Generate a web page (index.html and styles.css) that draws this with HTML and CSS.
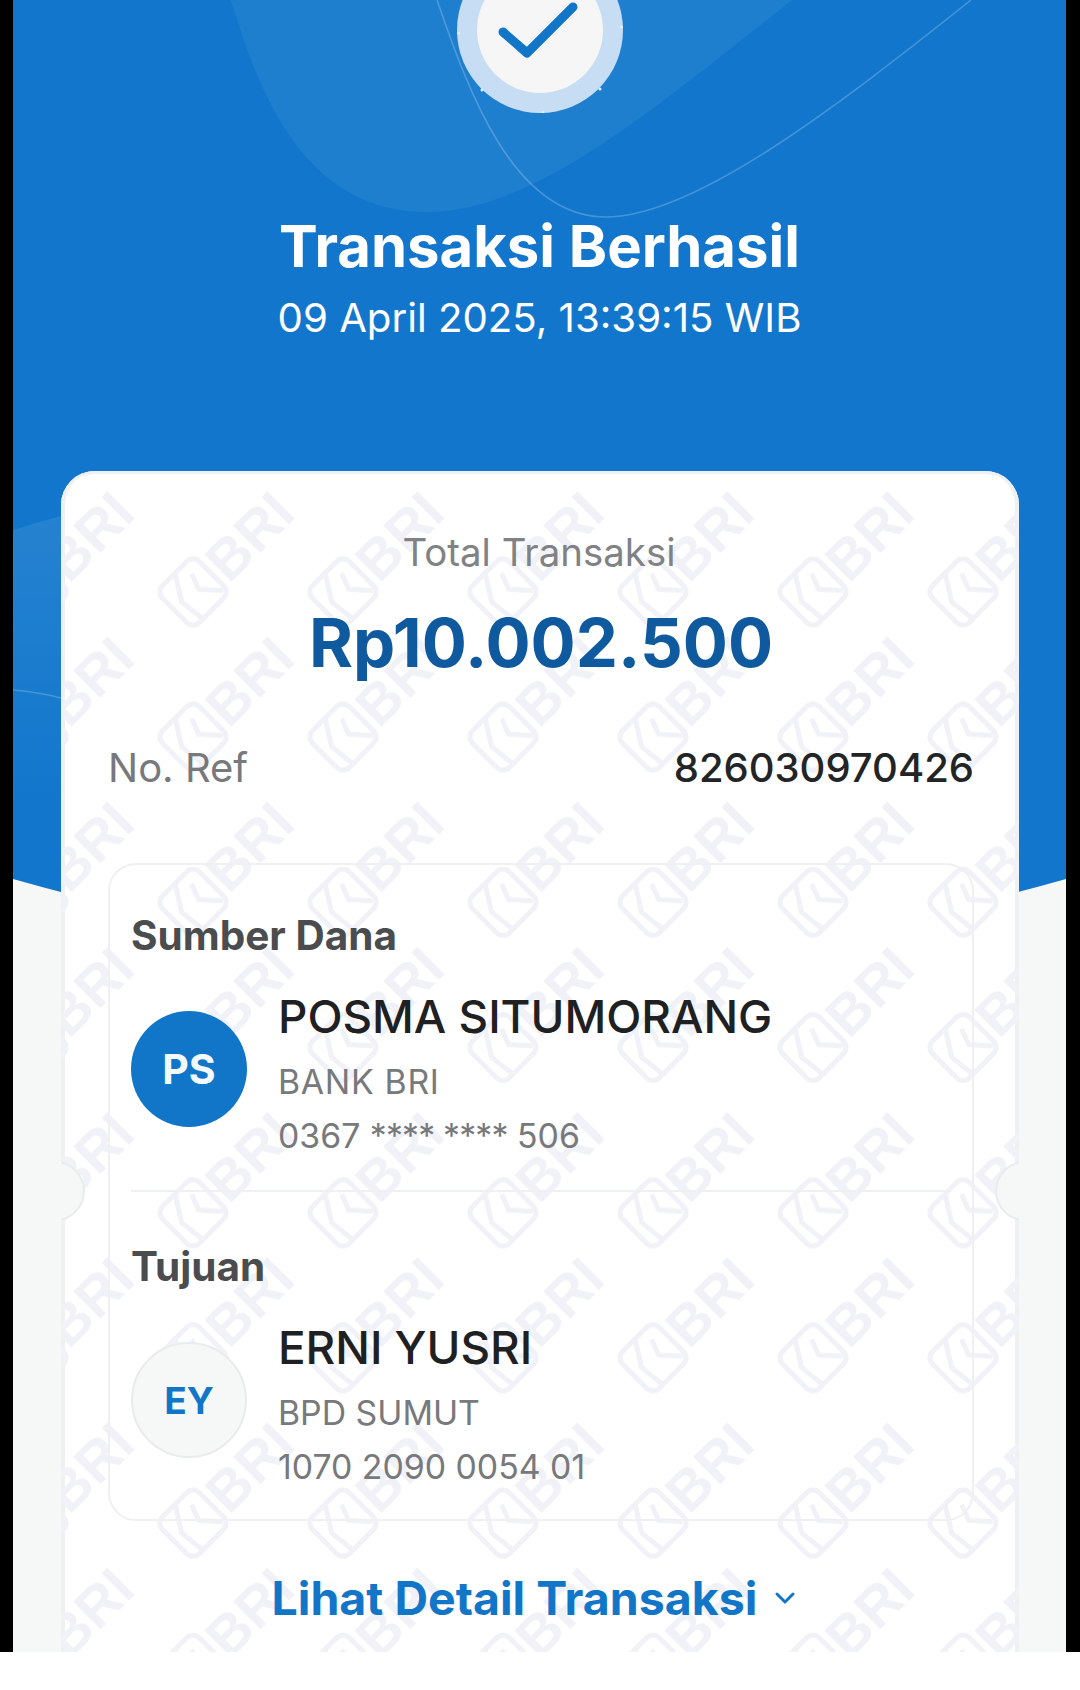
FILE: index.html
```html
<!DOCTYPE html>
<html lang="id">
<head>
  <meta charset="UTF-8">
  <title>Transaksi Berhasil</title>
  <link rel="stylesheet" href="styles.css">
</head>
<body>

<div class="screen">
  <!-- Latar biru dengan lengkung bawah -->
  <svg class="hero-bg" width="1053" height="960" viewBox="0 0 1053 960">
    <defs>
      <linearGradient id="sideFade" x1="0" y1="0" x2="0" y2="1">
        <stop offset="0" stop-color="#fff" stop-opacity="0.08"/>
        <stop offset="1" stop-color="#fff" stop-opacity="0"/>
      </linearGradient>
    </defs>
    <path d="M0 0H1053V879Q526 1029 0 879Z" fill="#1277cc"/>
    <path d="M218 0C245 90 290 212 414 212C520 212 640 110 779 0Z" fill="#fff" fill-opacity="0.06"/>
    <path d="M424 0C455 90 500 217 593 217C680 217 820 110 958 0" fill="none" stroke="#fff" stroke-opacity="0.22" stroke-width="1.5"/>
    <path d="M0 530Q25 522 48 516V800H0Z" fill="url(#sideFade)"/>
    <path d="M0 690Q25 692 48 698" fill="none" stroke="#fff" stroke-opacity="0.2" stroke-width="1.5"/>
  </svg>

  <div class="badge">
    <svg class="badge-icon" width="166" height="166" viewBox="0 0 166 166">
      <circle cx="83" cy="83" r="83" fill="#c6ddf3"/>
      <circle cx="83" cy="83" r="63" fill="#f6f6f6"/>
      <path d="M46 85L70 106L116 60" fill="none" stroke="#1276c8" stroke-width="9" stroke-linecap="round" stroke-linejoin="round"/>
      <g fill="#e4f0fb">
        <circle cx="86" cy="165" r="1.5"/>
        <circle cx="25" cy="143" r="1.5"/>
        <circle cx="143" cy="142" r="1.5"/>
        <circle cx="1.5" cy="86" r="1.5"/>
        <circle cx="164.5" cy="80" r="1.5"/>
      </g>
    </svg>
  </div>

  <h1 class="title">Transaksi Berhasil</h1>
  <p class="date">09 April 2025, 13:39:15 WIB</p>

  <div class="card">
    <svg class="watermark" width="958" height="1181">
      <defs>
        <g id="briLogo">
          <rect x="-26" y="-26" width="52" height="52" rx="9" fill="none" stroke="#f0f2f8" stroke-width="5"/>
          <path d="M0 -25L-15 -1L-12 25M12 -14L6 2L22 20" fill="none" stroke="#f0f2f8" stroke-width="5"/>
          <text class="wm-text" x="31" y="20">BRI</text>
        </g>
        <pattern id="briTile" x="87" y="11" width="310" height="310.4" patternUnits="userSpaceOnUse">
          <use href="#briLogo" transform="translate(45 110) rotate(-45)"/>
          <use href="#briLogo" transform="translate(195 110) rotate(-45)"/>
          <use href="#briLogo" transform="translate(45 255) rotate(-45)"/>
          <use href="#briLogo" transform="translate(195 255) rotate(-45)"/>
        </pattern>
      </defs>
      <rect width="958" height="1181" fill="url(#briTile)"/>
    </svg>

    <span class="notch notch-left"></span>
    <span class="notch notch-right"></span>

    <div class="card-body">
      <div class="total-label">Total Transaksi</div>
      <div class="total-value">Rp10.002.500</div>

      <div class="ref-row">
        <span class="ref-label">No. Ref</span>
        <span class="ref-value">826030970426</span>
      </div>

      <div class="parties">
        <div class="party party-source">
          <div class="party-title">Sumber Dana</div>
          <div class="party-row">
            <div class="avatar avatar-fill">PS</div>
            <div class="party-info">
              <div class="party-name">POSMA SITUMORANG</div>
              <div class="party-sub party-bank">BANK BRI</div>
              <div class="party-sub">0367 <span class="mask">**** ****</span> 506</div>
            </div>
          </div>
        </div>
        <div class="party party-target">
          <div class="party-title">Tujuan</div>
          <div class="party-row">
            <div class="avatar avatar-line">EY</div>
            <div class="party-info">
              <div class="party-name">ERNI YUSRI</div>
              <div class="party-sub">BPD SUMUT</div>
              <div class="party-sub">1070 2090 0054 01</div>
            </div>
          </div>
        </div>
      </div>

      <div class="detail-link">
        <span>Lihat Detail Transaksi</span>
        <svg width="22" height="14" viewBox="0 0 22 14"><path d="M3 3L11 11L19 3" fill="none" stroke="#1276c8" stroke-width="3" stroke-linecap="round" stroke-linejoin="round"/></svg>
      </div>
    </div>
  </div>
</div>

<div class="bottom-strip"></div>

</body>
</html>
```

FILE: styles.css
```css
body {
  margin: 0;
  background: #000;
  font-family: 'Inter', 'Liberation Sans', sans-serif;
}

.screen {
  position: relative;
  width: 1053px;
  height: 1652px;
  margin-left: 13px;
  overflow: hidden;
  background: #f6f8f8;
}

.bottom-strip {
  height: 38px;
  background: #fff;
}

.hero-bg {
  position: absolute;
  top: 0;
  left: 0;
}

.badge {
  position: relative;
  display: flex;
  justify-content: center;
  margin-top: -53px;
  height: 166px;
}

.title {
  position: relative;
  margin: 100px 0 0;
  text-align: center;
  font-size: 58px;
  line-height: 66px;
  font-weight: 700;
  color: #fff;
}

.date {
  position: relative;
  margin: 13px 0 0;
  text-align: center;
  font-size: 40.2px;
  line-height: 52px;
  color: #fff;
}

.card {
  position: relative;
  width: 958px;
  height: 1181px;
  margin: 127px 0 0 48px;
  background: #fff;
  box-shadow: inset 4px 0 0 #eef0f1, inset -4px 0 0 #eef0f1, inset 0 3px 0 #eef0f1;
  border-radius: 34px 34px 0 0;
  overflow: hidden;
}

.watermark {
  position: absolute;
  top: 0;
  left: 0;
}

.wm-text {
  font-family: 'Liberation Sans', sans-serif;
  font-size: 56px;
  font-weight: 700;
  fill: #f0f2f8;
}

.notch {
  position: absolute;
  top: 690px;
  width: 60px;
  height: 60px;
  border-radius: 50%;
  background: #f6f8f8;
  border: 2px solid #e9ecec;
  box-sizing: border-box;
}

.notch-left { left: -36px; }
.notch-right { right: -36px; }

.card-body {
  position: relative;
  padding: 58px 45px 0 47px;
}

.total-label {
  padding-right: 4px;
  text-align: center;
  font-size: 38.4px;
  line-height: 46px;
  color: #808285;
}

.total-value {
  margin-top: 28px;
  text-align: center;
  font-size: 67px;
  line-height: 80px;
  font-weight: 700;
  color: #0f5a9e;
}

.ref-row {
  display: flex;
  justify-content: space-between;
  align-items: center;
  margin-top: 61px;
  font-size: 40px;
  line-height: 48px;
}

.ref-label {
  color: #77797c;
}

.ref-value {
  font-weight: 500;
  color: #222426;
}

.parties {
  margin-top: 71px;
  height: 658px;
  padding: 0 21px;
  border: 2px solid #eef0f1;
  border-radius: 28px;
  box-sizing: border-box;
}

.party {
  padding-top: 48px;
}

.party-source {
  height: 327px;
  border-bottom: 2px solid #eef0f1;
  box-sizing: border-box;
}

.party-target {
  padding-top: 52px;
}

.party-title {
  font-size: 40.5px;
  line-height: 46px;
  font-weight: 700;
  color: #4a4c4e;
}

.party-row {
  display: flex;
  align-items: center;
  gap: 31px;
  margin-top: 30px;
}

.avatar {
  flex: none;
  display: flex;
  align-items: center;
  justify-content: center;
  width: 116px;
  height: 116px;
  margin-bottom: 14px;
  border-radius: 50%;
  font-size: 41px;
  font-weight: 700;
  box-sizing: border-box;
}

.avatar-fill {
  background: #1276c8;
  color: #f4f9fd;
}

.avatar-line {
  background: #f6f8f8;
  border: 2px solid #e9ecec;
  font-size: 37px;
  color: #1276c8;
}

.party-name {
  margin-bottom: 10px;
  font-size: 45.8px;
  line-height: 56px;
  font-weight: 500;
  color: #1e2022;
}

.party-sub {
  font-size: 33.8px;
  line-height: 54px;
  color: #77797c;
}

.party-bank {
  letter-spacing: 0.7px;
}

.mask {
  letter-spacing: -0.8px;
}

.detail-link {
  display: flex;
  justify-content: center;
  align-items: center;
  gap: 17px;
  margin-top: 50px;
  padding-right: 14px;
  font-size: 46.5px;
  line-height: 54px;
  font-weight: 700;
  color: #1276c8;
}
```
